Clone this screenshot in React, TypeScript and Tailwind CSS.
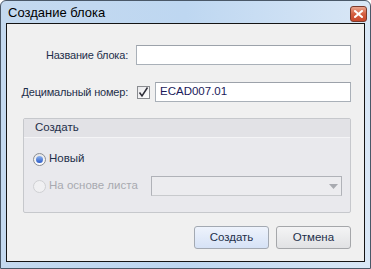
import React from 'react';

const font = { fontFamily: '"Liberation Sans", Arial, sans-serif' };

export default function App() {
  return (
    <div
      className="w-[371px] h-[269px] border border-[#4a5868] rounded-t-[6px] bg-gradient-to-r from-[#c4d9ef] via-[#bed7f1] to-[#d9e7f6] flex flex-col px-[5px] pb-[6px]"
      style={font}
    >
      {/* Title bar */}
      <div className="h-[22px] flex items-center justify-between pl-[2px] shrink-0">
        <span className="text-[13px] text-black leading-none pt-[1px]">Создание блока</span>
        <div className="w-[17px] h-[16px] mt-[4px] mr-[-2px] rounded-[3px] border border-[#7a3a2c] bg-gradient-to-b from-[#e9a58f] via-[#d45f41] to-[#c9472b] flex items-center justify-center">
          <svg width="9" height="8" viewBox="0 0 9 8">
            <path d="M1 1 L8 7 M8 1 L1 7" stroke="#fff" strokeWidth="2" strokeLinecap="square" />
          </svg>
        </div>
      </div>

      {/* Client area */}
      <div className="flex-1 border border-[#141414] bg-[#f0f0f0] pt-[21px] pl-[16px] pr-[13px] flex flex-col text-[11.5px] text-[#1e2f4a]">
        <div className="flex items-center h-[20px]">
          <div className="w-[105px] flex justify-end whitespace-nowrap text-[11px] tracking-[-0.2px]">Название блока:</div>
          <div className="ml-[8px] flex-1 h-[20px] bg-white border border-[#a9b0b8] border-t-[#9ca2aa]" />
        </div>

        <div className="flex items-center h-[20px] mt-[17px]">
          <div className="w-[105px] flex justify-end whitespace-nowrap text-[11px] tracking-[-0.2px]">Децимальный номер:</div>
          <div className="ml-[9px] w-[13px] h-[13px] border border-[#8a8c90] bg-gradient-to-br from-[#e8e8ea] to-white flex items-center justify-center">
            <svg width="11" height="11" viewBox="0 0 11 11">
              <path d="M1.5 5.5 L4 9 L9.5 0.5" stroke="#2e2e38" strokeWidth="1.5" fill="none" />
            </svg>
          </div>
          <div className="ml-[5px] flex-1 h-[20px] bg-white border border-[#a9b0b8] border-t-[#9ca2aa] flex items-center pl-[4px] text-[#1a1a5a]">
            ECAD007.01
          </div>
        </div>

        {/* Group box */}
        <div className="mt-[16px] h-[95px] border border-[#c6c8cc] rounded-[2px] bg-[#e9e9ed] flex flex-col">
          <div className="h-[19px] bg-[#e2e2e6] border-b border-b-[#f4f4f6] flex items-center pl-[11px]">
            Создать
          </div>
          <div className="flex-1 pl-[9px] pr-[8px] flex flex-col">
            <div className="flex items-center h-[14px] mt-[14px]">
              <div className="w-[13px] h-[13px] rounded-full border border-[#8b8e93] bg-gradient-to-b from-[#e6e6e8] to-white flex items-center justify-center">
                <div className="w-[7px] h-[7px] rounded-full bg-gradient-to-b from-[#8fb3ec] to-[#2c59c8]" />
              </div>
              <span className="ml-[3px]">Новый</span>
            </div>
            <div className="flex items-center mt-[10px]">
              <div className="w-[13px] h-[13px] rounded-full border border-[#cfd0d3] bg-[#f0f0f2]" />
              <span className="ml-[3px] text-[#a8a9b0] w-[102px]">На основе листа</span>
              <div className="flex-1 h-[20px] bg-[#ececef] border border-[#b0b2b8] border-b-[#c8cacd] flex items-center justify-end pr-[3px]">
                <svg width="9" height="5" viewBox="0 0 9 5">
                  <path d="M0 0 H9 L4.5 5 Z" fill="#a8aab0" />
                </svg>
              </div>
            </div>
          </div>
        </div>

        {/* Buttons */}
        <div className="mt-[13px] flex justify-end gap-[7px]">
          <button className="w-[75px] h-[23px] rounded-[3px] border border-[#a3a9b2] bg-gradient-to-b from-[#eef3fc] to-[#d6e2f6] text-[11.5px] text-[#1e2f4a]">
            Создать
          </button>
          <button className="w-[75px] h-[23px] rounded-[3px] border border-[#a5a7aa] bg-gradient-to-b from-[#f4f4f5] to-[#e1e2e4] text-[11.5px] text-[#1e2f4a]">
            Отмена
          </button>
        </div>
      </div>
    </div>
  );
}
